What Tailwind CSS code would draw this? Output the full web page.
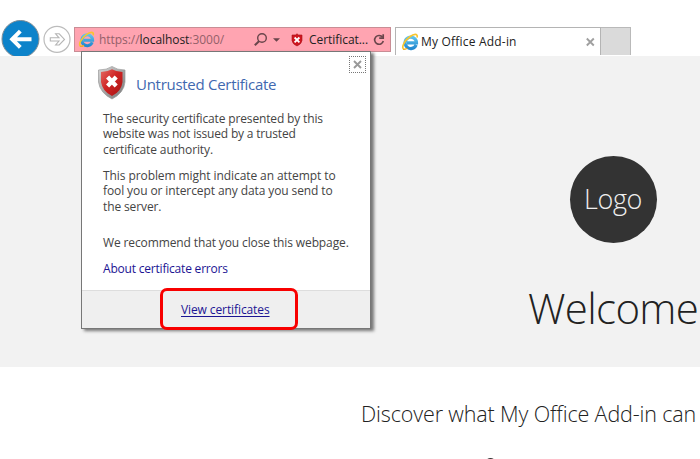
<!DOCTYPE html>
<html lang="en">
<head>
<meta charset="utf-8">
<title>My Office Add-in</title>
<script src="https://cdn.jsdelivr.net/npm/@tailwindcss/browser@4"></script>
</head>
<body class="relative h-[459px] w-[700px] overflow-hidden bg-white font-['Open_Sans','Noto_Sans',sans-serif] text-[#222]">
<svg class="absolute h-0 w-0" aria-hidden="true">
  <defs>
    <linearGradient id="blue" x1="0" y1="0" x2="0" y2="1"><stop offset="0" stop-color="#5fc3ec"/><stop offset="1" stop-color="#2389d0"/></linearGradient>
    <linearGradient id="red" x1="0" y1="0" x2="1" y2="1"><stop offset="0" stop-color="#e46a63"/><stop offset=".45" stop-color="#cf2525"/><stop offset="1" stop-color="#a91313"/></linearGradient>
    <linearGradient id="silver" x1="0" y1="0" x2="1" y2="1"><stop offset="0" stop-color="#d8d8d8"/><stop offset=".5" stop-color="#a5a5a5"/><stop offset="1" stop-color="#777"/></linearGradient>
    <symbol id="ie" viewBox="0 0 18 18">
      <path d="M15.1 11.9A5.7 5.7 0 1 1 15.5 9.9H6" fill="none" stroke="url(#blue)" stroke-width="3.2"/>
      <path d="M3 16.2C-.1 15.2 2.8 8.1 8.8 3.8C12.9 .8 16.6 .4 16.2 3.9" fill="none" stroke="#f8c52e" stroke-width="1.7" stroke-linecap="round"/>
      <path d="M2.6 16.3C3.5 16.5 4.7 16.1 5.8 15.5" fill="none" stroke="#f1ad20" stroke-width="1.3" stroke-linecap="round"/>
    </symbol>
  </defs>
</svg>
<header class="flex h-14 items-start bg-white">
  <svg class="mt-[18px] h-[38px] w-[42px] shrink-0" viewBox="0 0 42 38">
    <circle cx="20.5" cy="21" r="18.5" fill="#0d83ca" stroke="#7d8b94" stroke-width="1"/>
    <path d="M31.5 21.3H13M20.3 13.2L12.2 21.3L20.3 29.4" fill="none" stroke="#fff" stroke-width="4"/>
  </svg>
  <svg class="mt-[25px] h-[30px] w-[32px] shrink-0" viewBox="0 0 32 30">
    <circle cx="15" cy="14.3" r="13" fill="#fff" stroke="#bcbcbc" stroke-width="1.2"/>
    <path d="M8.3 12.8H17L13.6 8.8H17.2L22.5 14.4L17.2 20H13.6L17 16H8.3Z" fill="#fff" stroke="#b5b5b5" stroke-width="1.1"/>
  </svg>
  <div class="mt-[27px] flex h-[25px] w-[317px] shrink-0 items-center border border-[#c98d95] bg-[#ffa4b1] text-[12px]">
    <svg class="ml-[3px] h-[17px] w-[17px] shrink-0"><use href="#ie"/></svg>
    <span class="ml-[4px] w-[154px] shrink-0 whitespace-nowrap tracking-[-0.05px] text-[#946069]">https://<span class="text-[#222]">localhost</span>:3000/</span>
    <svg class="h-[16px] w-[30px] shrink-0" viewBox="0 0 30 16" fill="none"><circle cx="9" cy="6" r="4.3" stroke="#69454b" stroke-width="1.4"/><path d="M6 9.2L1.8 13.3" stroke="#69454b" stroke-width="2"/><path d="M20 6.3H27L23.5 9.7Z" fill="#69454b"/></svg>
    <svg class="ml-[8px] h-[14px] w-[12px] shrink-0" viewBox="0 0 12 14"><path d="M6 .8L7.5 1.9L11 2V7.5Q10.5 11 6 13Q1.5 11 1 7.5V2L4.5 1.9Z" fill="#cf1620" stroke="#aa1019" stroke-width=".6"/><path d="M3.6 4.5L8.4 9.3M8.4 4.5L3.6 9.3" stroke="#fff" stroke-width="1.8"/></svg>
    <span class="ml-[6px] w-[64px] shrink-0 whitespace-nowrap tracking-[-0.05px] text-[#222]">Certificat...</span>
    <svg class="h-[14px] w-[12px] shrink-0" viewBox="0 0 12 14" fill="none" stroke="#69454b"><path d="M9.6 4.3A4.4 4.4 0 1 0 10.3 8" stroke-width="1.6"/><path d="M10.2 1.2V5.2H6.2" stroke-width="1.7"/></svg>
  </div>
  <div class="mt-[27px] ml-[4px] flex h-[28px] w-[206px] shrink-0 items-center border-x border-t border-[#b4b4b4] bg-white text-xs">
    <svg class="ml-[5px] h-[18px] w-[18px] shrink-0"><use href="#ie"/></svg>
    <span class="ml-[2px] w-[165px] shrink-0 whitespace-nowrap tracking-[0.2px]">My Office Add-in</span>
    <svg class="h-[10px] w-[10px] shrink-0" viewBox="0 0 10 10"><path d="M.8 1.5L7.8 8.5M7.8 1.5L.8 8.5" stroke="#a0a0a0" stroke-width="1.9"/></svg>
  </div>
  <div class="mt-[27px] h-[28px] w-[30px] shrink-0 border-t border-r border-[#b9b9b9] bg-[#dadada]"></div>
</header>
<main>
  <section class="h-[310.5px] bg-[#f2f2f2] pt-[100px] pl-[528px]">
    <div class="ml-[41.5px] flex h-[87px] w-[87px] items-center justify-center rounded-full bg-[#333] text-[27px] font-light tracking-[-0.4px] text-[#eee]"><span>Logo</span></div>
    <h1 class="mt-[35px] text-[42px] leading-[60px] font-light whitespace-nowrap tracking-[-0.65px]"><span>Welcome</span></h1>
  </section>
  <section class="h-[93px] overflow-hidden bg-white pl-[361px]">
    <p class="pt-[32.5px] text-[21.5px] leading-[30px] font-light whitespace-nowrap tracking-[-0.13px]"><span>Discover what My Office Add-in can</span></p>
    <div class="mt-[28.5px] ml-[124px] h-[14px] w-[11px] rounded-t-full border-t border-[#333]"></div>
  </section>
</main>
<aside class="absolute top-[51px] left-[81px] h-[278px] w-[290px] border border-[#777] bg-white text-[12px] leading-[15.5px] text-[#444] shadow-[3px_2px_3px_#777]">
  <div class="flex h-[58.5px]">
    <svg class="mt-[13px] ml-[15px] h-[36px] w-[30px] shrink-0" viewBox="0 0 30 36">
      <path d="M15 1.5Q20 5 28 5V17Q27 28 15 34Q3 28 1.5 17V5Q10 5 15 1.5Z" fill="url(#silver)" stroke="#999" stroke-width=".7"/>
      <path d="M15 4.2Q20 7 25.5 7V17Q24.5 26.5 15 31Q5.5 26.5 4 17V7Q10 7 15 4.2Z" fill="url(#red)"/>
      <path d="M10.6 12L19.2 21M19.2 12L10.6 21" stroke="#fff" stroke-width="4.3"/>
    </svg>
    <h2 class="mt-[21.5px] ml-[9px] w-[213px] shrink-0 text-[15px] leading-5 whitespace-nowrap tracking-[-0.28px] text-[#4168b0]"><span>Untrusted Certificate</span></h2>
    <button class="mt-[4px] flex h-[17px] w-[17px] shrink-0 items-center justify-center border border-dotted border-[#777]" aria-label="Close"><svg class="h-[9px] w-[9px]" viewBox="0 0 9 9"><path d="M1 1L8 8M8 1L1 8" stroke="#999" stroke-width="1.9"/></svg></button>
  </div>
  <div class="h-[179.5px] pl-[21px] whitespace-nowrap tracking-[-0.12px]">
    <p><span class="tracking-[-0.15px]">The security certificate presented by this</span><br><span class="tracking-[-0.18px]">website was not issued by a trusted</span><br><span>certificate authority.</span></p>
    <p class="mt-[10.5px]"><span class="tracking-[-0.08px]">This problem might indicate an attempt to</span><br><span class="tracking-[-0.1px]">fool you or intercept any data you send to</span><br><span>the server.</span></p>
    <p class="mt-[20.5px]"><span>We recommend that you close this webpage.</span></p>
    <p class="mt-[10.5px] text-[#1b1493]"><span class="tracking-[-0.2px]">About certificate errors</span></p>
  </div>
  <div class="flex h-[38px] items-center border-t border-[#ddd] bg-[#efefef] pl-[99px] tracking-[-0.1px] text-[#1b1493]"><a class="underline underline-offset-2 whitespace-nowrap">View certificates</a></div>
</aside>
<div class="absolute top-[288px] left-[160px] h-[42px] w-[138px] rounded-[7px] border-[3px] border-[#f80000]"></div>
</body>
</html>
